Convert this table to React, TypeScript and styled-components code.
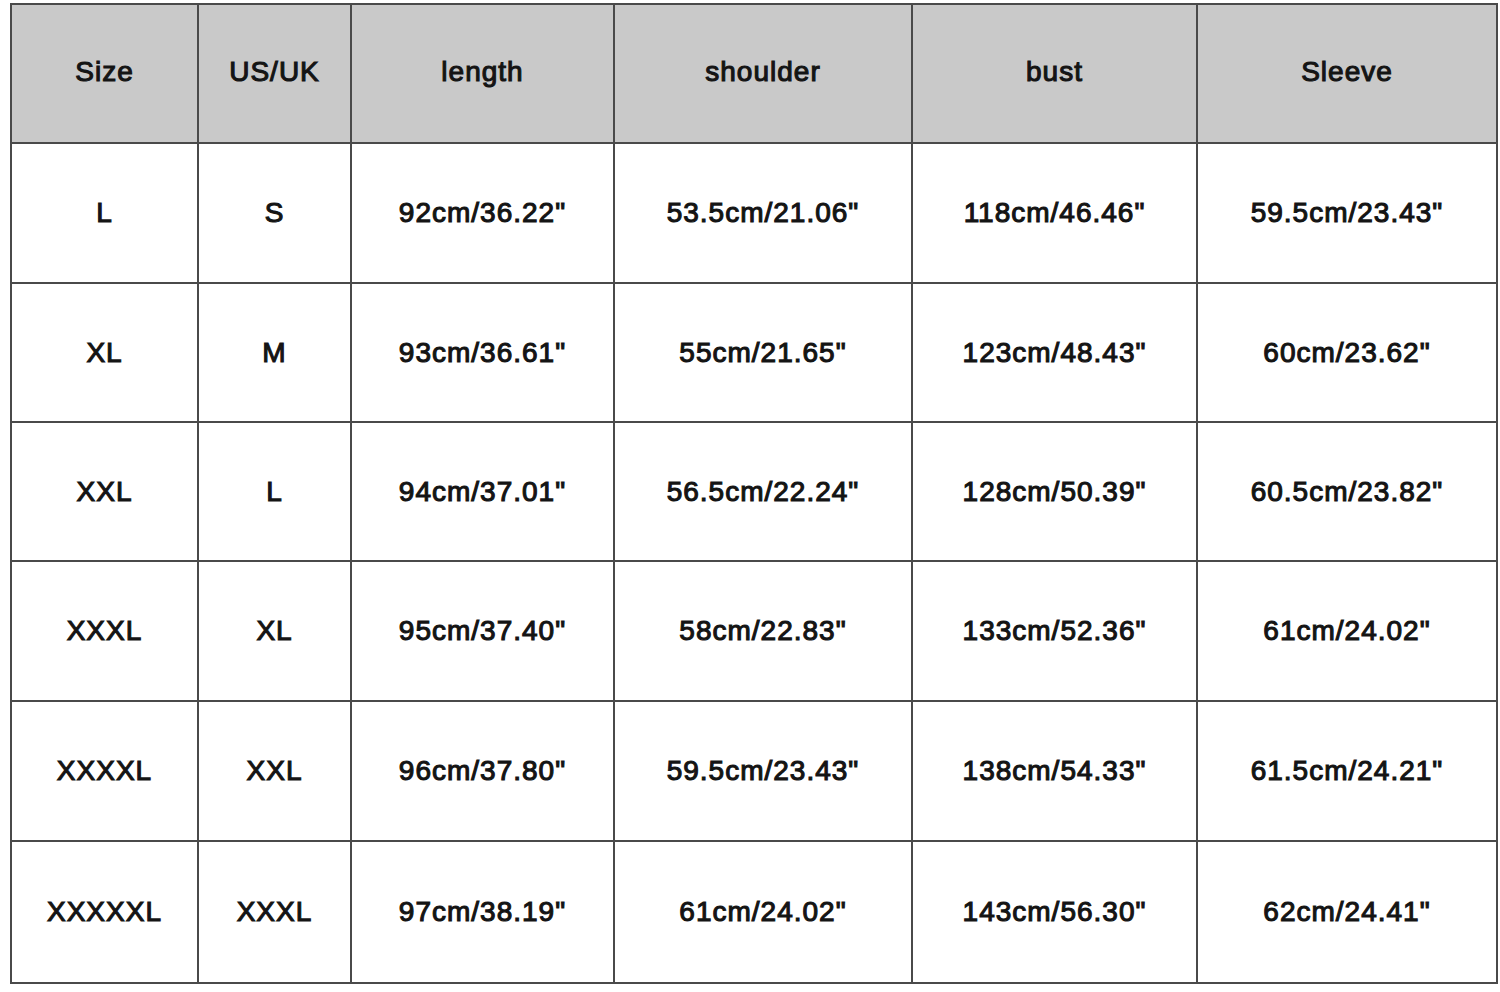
import React from "react";
import styled, { createGlobalStyle } from "styled-components";

const GlobalStyle = createGlobalStyle`
  html, body {
    margin: 0;
    padding: 0;
    background: #ffffff;
  }
`;

const Page = styled.div`
  width: 1500px;
  height: 992px;
  box-sizing: border-box;
  padding: 3px 2px 0 10px;
  background: #ffffff;
`;

const Table = styled.div`
  display: grid;
  grid-template-columns: 185px 151px 261px 296px 283px 298px;
  grid-template-rows: 137px 138px 137px 137px 138px 138px 140px;
  gap: 2px;
  border: 2px solid #4a4a4a;
  background: #4a4a4a;
  width: max-content;
`;

const Cell = styled.div<{ head?: boolean }>`
  display: flex;
  align-items: center;
  justify-content: center;
  box-sizing: border-box;
  padding-bottom: ${(props) => (props.head ? "4px" : "0")};
  background: ${(props) => (props.head ? "#c9c9c9" : "#ffffff")};
  color: #141414;
  font-family: "Liberation Sans", Arial, sans-serif;
  font-weight: normal;
  font-size: 28px;
  letter-spacing: 1px;
  -webkit-text-stroke: 1.1px #141414;
  white-space: nowrap;
`;

const headers = ["Size", "US/UK", "length", "shoulder", "bust", "Sleeve"];

const rows = [
  ["L", "S", '92cm/36.22"', '53.5cm/21.06"', '118cm/46.46"', '59.5cm/23.43"'],
  ["XL", "M", '93cm/36.61"', '55cm/21.65"', '123cm/48.43"', '60cm/23.62"'],
  ["XXL", "L", '94cm/37.01"', '56.5cm/22.24"', '128cm/50.39"', '60.5cm/23.82"'],
  ["XXXL", "XL", '95cm/37.40"', '58cm/22.83"', '133cm/52.36"', '61cm/24.02"'],
  ["XXXXL", "XXL", '96cm/37.80"', '59.5cm/23.43"', '138cm/54.33"', '61.5cm/24.21"'],
  ["XXXXXL", "XXXL", '97cm/38.19"', '61cm/24.02"', '143cm/56.30"', '62cm/24.41"'],
];

export default function App() {
  return (
    <Page>
      <GlobalStyle />
      <Table>
        {headers.map((h) => (
          <Cell head key={h}>
            {h}
          </Cell>
        ))}
        {rows.map((r, i) =>
          r.map((v, j) => <Cell key={i + "-" + j}>{v}</Cell>)
        )}
      </Table>
    </Page>
  );
}
